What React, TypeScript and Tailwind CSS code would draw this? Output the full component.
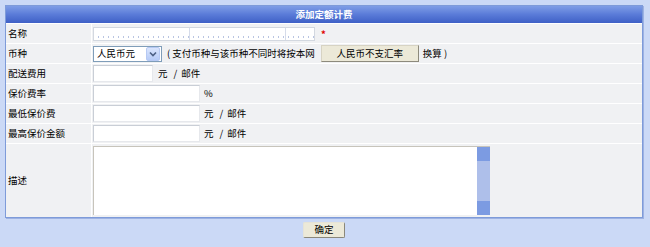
import type { ReactNode } from 'react'

function Label({ children, tall }: { children: ReactNode; tall?: boolean }) {
  return (
    <div className={`flex items-center bg-[#f0f1f3] pl-[2px] ${tall ? 'h-[73px]' : 'h-[19px]'}`}>
      {children}
    </div>
  )
}

function Cell({ children, tall }: { children: ReactNode; tall?: boolean }) {
  return (
    <div className={`flex items-center bg-[#f0f1f3] pl-px ${tall ? 'h-[73px]' : 'h-[19px]'}`}>
      {children}
    </div>
  )
}

function TextBox({ width }: { width: string }) {
  return <div className={`h-[17px] bg-white border border-[#c9ced6] border-r-[#e6e8ec] border-b-[#e6e8ec] ${width}`} />
}

function PerMail({ className }: { className: string }) {
  return (
    <span className={`flex items-center ${className}`}>
      元<span className="ml-[6px]">/</span>
      <span className="ml-[4px]">邮件</span>
    </span>
  )
}

export default function App() {
  return (
    <div className="min-h-[247px] w-[650px] bg-[#cbd9f6] pt-[5px] font-['Noto_Sans_CJK_SC',sans-serif] text-[9.5px] leading-none text-black">
      <div className="ml-[5px] w-[638px] border border-[#7e9bd9] bg-white shadow-[1px_1px_0_#9db2e3]">
        <div className="grid grid-cols-[85px_1fr] gap-px">
          {/* header */}
          <div className="col-span-2 flex h-[17px] items-center justify-center bg-gradient-to-b from-[#7f9de6] via-[#5a7bd8] to-[#3f60c6] font-bold text-white">
            添加定额计费
          </div>

          <Label>名称</Label>
          <Cell>
            <div className="h-[14px] w-[222px] border border-[#d3d8e0] bg-white bg-[image:repeating-linear-gradient(90deg,transparent_0_95px,#d6dcea_95px_96px),repeating-linear-gradient(90deg,transparent_0_4px,#b9c5e2_4px_5px)] bg-[length:100%_100%,100%_2px] bg-[position:0_0,0_8px] bg-no-repeat" />
            <span className="ml-[6px] mt-[3px] font-bold text-[#e00000]">*</span>
          </Cell>

          <Label>币种</Label>
          <Cell>
            <div className="flex h-[16px] w-[69px] items-center border border-[#7f9db9] bg-white">
              <span className="ml-[3px] flex-1">人民币元</span>
              <span className="mr-px flex h-[14px] w-[14px] items-center justify-center rounded-[2px] border border-[#b6c9f3] bg-gradient-to-b from-[#dae5fd] to-[#b6cbf7]">
                <svg width="8" height="6" viewBox="0 0 8 6">
                  <path d="M1 1.5 L4 4.5 L7 1.5" fill="none" stroke="#4d6185" strokeWidth="1.6" />
                </svg>
              </span>
            </div>
            <span className="ml-[5px]">( 支付币种与该币种不同时将按本网</span>
            <div className="ml-[6px] flex h-[17px] w-[98px] items-center justify-center border border-[#d7d3c3] border-r-[#8d8a7c] border-b-[#8d8a7c] bg-[#ece9d8]">
              人民币不支汇率
            </div>
            <span className="ml-[4px]">换算 )</span>
          </Cell>

          <Label>配送费用</Label>
          <Cell>
            <TextBox width="w-[60px]" />
            <PerMail className="ml-[5px]" />
          </Cell>

          <Label>保价费率</Label>
          <Cell>
            <TextBox width="w-[107px]" />
            <span className="ml-[4px]">%</span>
          </Cell>

          <Label>最低保价费</Label>
          <Cell>
            <TextBox width="w-[107px]" />
            <PerMail className="ml-[4px]" />
          </Cell>

          <Label>最高保价金额</Label>
          <Cell>
            <TextBox width="w-[107px]" />
            <PerMail className="ml-[4px]" />
          </Cell>

          <Label tall>描述</Label>
          <Cell tall>
            <div className="flex h-[69px] w-[397px] border-l border-t border-[#c7c4bb] bg-white">
              <div className="flex-1" />
              <div className="flex w-[13px] flex-col bg-[#aebfea]">
                <div className="h-[14px] bg-[#7c9be2]" />
                <div className="flex-1" />
                <div className="h-[14px] bg-[#7c9be2]" />
              </div>
            </div>
          </Cell>
        </div>
      </div>

      <div className="ml-[5px] mt-[4px] flex w-[638px] justify-center">
        <div className="flex h-[16px] w-[42px] items-center justify-center rounded-[2px] border border-[#e6e3d6] border-r-[#8a877a] border-b-[#8a877a] bg-[#ece9d8]">
          确定
        </div>
      </div>
    </div>
  )
}
